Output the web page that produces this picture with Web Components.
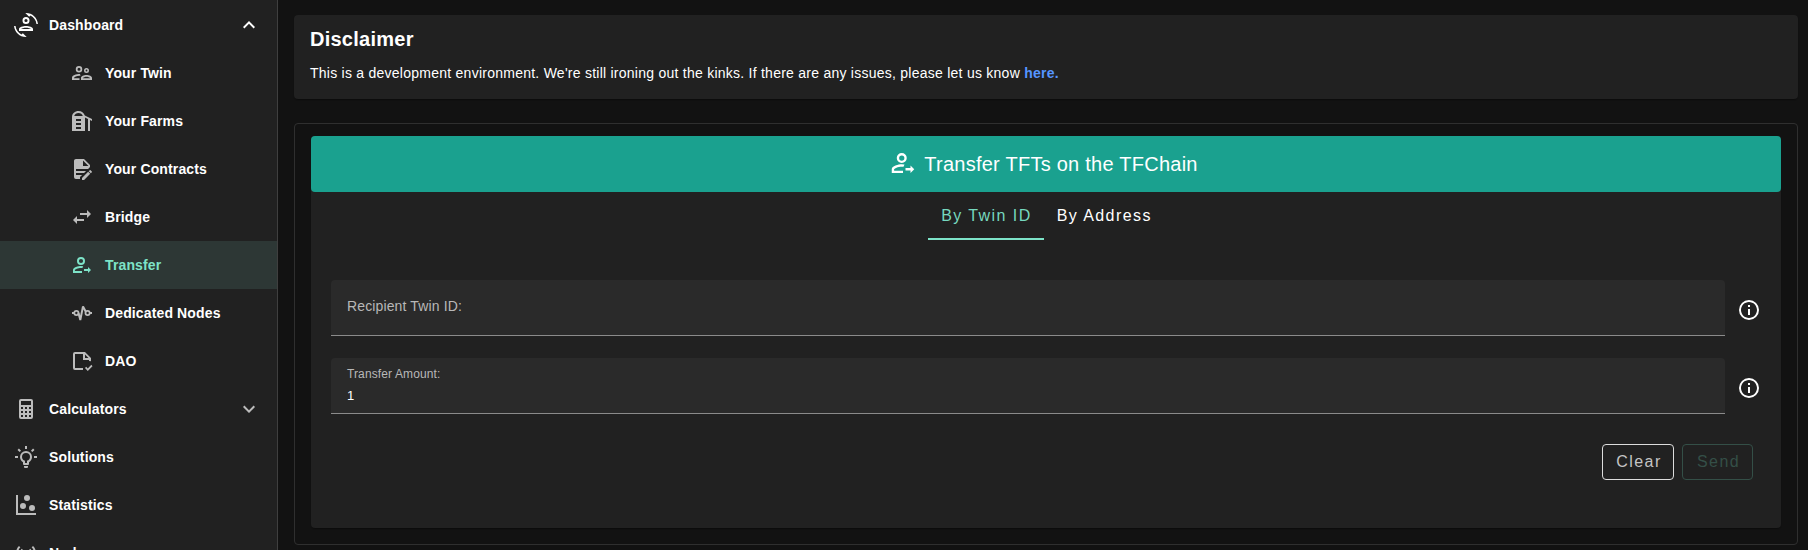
<!DOCTYPE html>
<html lang="en">
<head>
<meta charset="utf-8">
<title>Transfer</title>
<style>
body{margin:0;background:#121212;color:#fff;font-family:"Liberation Sans",Arial,sans-serif;overflow:hidden}
</style>
</head>
<body>
<dash-app></dash-app>
<script>
const ICONS = {
  convert: '<path d="M7.5 21.5L8.85 20.16L12.66 23.97L12 24C5.71 24 .56 19.16 .05 13H1.55C1.91 16.76 4.25 19.94 7.5 21.5M16.5 2.5L15.15 3.84L11.34 .03L12 0C18.29 0 23.44 4.84 23.95 11H22.45C22.09 7.24 19.75 4.07 16.5 2.5"/><path fill-rule="evenodd" d="M12 4A3.5 3.5 0 1 1 12 11A3.5 3.5 0 1 1 12 4M12 5.9A1.6 1.6 0 1 0 12 9.1A1.6 1.6 0 1 0 12 5.9M5 18V16C5 13.9 9 13 12 13S19 13.9 19 16V18ZM7.2 16.1H16.8C16.4 15.4 14 14.8 12 14.8S7.6 15.4 7.2 16.1Z"/>',
  twin: '<path fill-rule="evenodd" d="M9 5A3.25 3.25 0 1 1 9 11.5A3.25 3.25 0 1 1 9 5M9 6.75A1.5 1.5 0 1 0 9 9.75A1.5 1.5 0 1 0 9 6.75M16.5 7A2.5 2.5 0 1 1 16.5 12A2.5 2.5 0 1 1 16.5 7M16.5 8.6A.9 .9 0 1 0 16.5 10.4A.9 .9 0 1 0 16.5 8.6M2 19V16.8C2 14.2 6 13 10 13L10.5 14.7C7 14.5 4.2 15.6 3.9 17.2H9.5V19ZM11 19V17C11 15 13.8 14 16.5 14S22 15 22 17V19ZM12.9 17.3H20.1C19.5 16.3 18 15.8 16.5 15.8S13.5 16.3 12.9 17.3Z"/>',
  silo: '<path fill-rule="evenodd" d="M2 22V8C2 4.5 5 2 8.5 2C11.5 2 14 3.8 14.8 6.5L22 10V12L20 11V22H18V10L15 8.6V22ZM4.2 7H12.8C12.2 5.2 10.6 4 8.5 4S4.8 5.2 4.2 7ZM6 10V12H11V10ZM6 14V16H11V14ZM6 18V20H11V18Z"/>',
  contract: '<path d="M6,2C4.89,2 4,2.89 4,4V20A2,2 0 0,0 6,22H10V20.09L12.09,18H6V16H14.09L16.09,14H6V12H18.09L20,10.09V8L14,2H6M13,3.5L18.5,9H13V3.5M20.15,13C20,13 19.86,13.05 19.75,13.16L18.73,14.18L20.82,16.26L21.84,15.25C22.05,15.03 22.05,14.67 21.84,14.46L20.54,13.16C20.43,13.05 20.29,13 20.15,13M18.14,14.77L12,20.92V23H14.08L20.23,16.85L18.14,14.77Z"/>',
  bridge: '<path d="M21,9L17,5V8H10V10H17V13M7,11L3,15L7,19V16H14V14H7V11Z"/>',
  transfer: '<path fill-rule="evenodd" d="M11 4A4 4 0 1 1 11 12A4 4 0 1 1 11 4M11 5.9A2.1 2.1 0 1 0 11 10.1A2.1 2.1 0 1 0 11 5.9M3 20V17C3 14.33 8.33 13 11 13L13.2 13.2L12.4 15L11 14.9C8 14.9 4.9 16.36 4.9 17V18.1H12V20ZM14 16H18V14L21 17L18 20V18H14Z"/>',
  nodes: '<path fill="none" stroke="currentColor" stroke-width="2" stroke-linejoin="bevel" d="M2 12H4.2M8.5 12L10.3 19L13 5.4L15.8 10.8M19.8 12H22"/><g fill="none" stroke="currentColor" stroke-width="1.8"><circle cx="6.4" cy="12" r="2.1"/><circle cx="17.6" cy="12" r="2.1"/></g>',
  dao: '<path fill-rule="evenodd" d="M5 3H15L21 9V12.3L19 12V11H13V5H5V19H13V21H5A2 2 0 0 1 3 19V5A2 2 0 0 1 5 3M15 5.5V9H18.5ZM17.75 22L15 19L16.16 17.84L17.75 19.43L21.34 15.84L22.5 17.25Z"/>',
  calc: '<path d="M7,2H17A2,2 0 0,1 19,4V20A2,2 0 0,1 17,22H7A2,2 0 0,1 5,20V4A2,2 0 0,1 7,2M7,4V8H17V4H7M7,10V12H9V10H7M11,10V12H13V10H11M15,10V12H17V10H15M7,14V16H9V14H7M11,14V16H13V14H11M15,14V16H17V14H15M7,18V20H9V18H7M11,18V20H13V18H11M15,18V20H17V18H15Z"/>',
  bulb: '<path d="M20,11H23V13H20V11M1,11H4V13H1V11M13,1V4H11V1H13M4.92,3.5L7.05,5.64L5.63,7.05L3.5,4.93L4.92,3.5M16.95,5.63L19.07,3.5L20.5,4.93L18.37,7.05L16.95,5.63M12,6A6,6 0 0,1 18,12C18,14.22 16.79,16.16 15,17.2V19A1,1 0 0,1 14,20H10A1,1 0 0,1 9,19V17.2C7.21,16.16 6,14.22 6,12A6,6 0 0,1 12,6M14,21V22A1,1 0 0,1 13,23H11A1,1 0 0,1 10,22V21H14M11,18H13V15.87C14.73,15.43 16,13.86 16,12A4,4 0 0,0 12,8A4,4 0 0,0 8,12C8,13.86 9.27,15.43 11,15.87V18Z"/>',
  scatter: '<path d="M2,2H4V20H22V22H2V2M9,10A3,3 0 0,1 12,13A3,3 0 0,1 9,16A3,3 0 0,1 6,13A3,3 0 0,1 9,10M13,2A3,3 0 0,1 16,5A3,3 0 0,1 13,8A3,3 0 0,1 10,5A3,3 0 0,1 13,2M18,12A3,3 0 0,1 21,15A3,3 0 0,1 18,18A3,3 0 0,1 15,15A3,3 0 0,1 18,12Z"/>',
  access: '<path d="M4.93,4.93C3.12,6.74 2,9.24 2,12C2,14.76 3.12,17.26 4.93,19.07L6.34,17.66C4.89,16.22 4,14.22 4,12C4,9.79 4.89,7.78 6.34,6.34L4.93,4.93M19.07,4.93L17.66,6.34C19.11,7.78 20,9.79 20,12C20,14.22 19.11,16.22 17.66,17.66L19.07,19.07C20.88,17.26 22,14.76 22,12C22,9.24 20.88,6.74 19.07,4.93M7.76,7.76C6.67,8.85 6,10.35 6,12C6,13.65 6.67,15.15 7.76,16.24L9.17,14.83C8.45,14.11 8,13.11 8,12C8,10.89 8.45,9.89 9.17,9.17L7.76,7.76M16.24,7.76L14.83,9.17C15.55,9.89 16,10.89 16,12C16,13.11 15.55,14.11 14.83,14.83L16.24,16.24C17.33,15.15 18,13.65 18,12C18,10.35 17.33,8.85 16.24,7.76M12,10A2,2 0 0,0 10,12A2,2 0 0,0 12,14A2,2 0 0,0 14,12A2,2 0 0,0 12,10Z"/>',
  info: '<path d="M11,9H13V7H11M12,20C7.59,20 4,16.41 4,12C4,7.59 7.59,4 12,4C16.41,4 20,7.59 20,12C20,16.41 16.41,20 12,20M12,2A10,10 0 0,0 2,12A10,10 0 0,0 12,22A10,10 0 0,0 22,12A10,10 0 0,0 12,2M11,17H13V11H11V17Z"/>',
  up: '<path d="M7.41,15.41L12,10.83L16.59,15.41L18,14L12,8L6,14L7.41,15.41Z"/>',
  down: '<path d="M7.41,8.58L12,13.17L16.59,8.58L18,10L12,16L6,10L7.41,8.58Z"/>'
};

function define(name, render) {
  customElements.define(name, class extends HTMLElement {
    constructor() { super(); this.attachShadow({ mode: 'open' }); }
    connectedCallback() { this.shadowRoot.innerHTML = render(this); }
  });
}

define('dash-icon', el => `<style>
  :host{display:block;width:24px;height:24px;flex:none}
  svg{display:block;width:100%;height:100%;fill:currentColor}
</style><svg viewBox="0 0 24 24">${ICONS[el.getAttribute('name')]}</svg>`);

define('nav-item', el => `<style>
  :host{display:flex;align-items:center;height:48px;box-sizing:border-box;padding:0 16px 0 14px;gap:11px;font-weight:700;font-size:14px;line-height:20px;letter-spacing:.00938em;flex:none}
  :host([sub]){padding-left:70px}
  :host([active]){background:#2d3735;color:#7de3c8}
  dash-icon{color:#bcbcbc}
  :host([bright]) dash-icon{color:#fff}
  :host([active]) dash-icon{color:inherit}
  span{flex:1}
</style><dash-icon name="${el.getAttribute('icon')}"></dash-icon><span><slot></slot></span>
${el.hasAttribute('chevron') ? `<dash-icon name="${el.getAttribute('chevron')}"></dash-icon>` : ''}`);

define('side-nav', () => `<style>
  :host{display:flex;flex-direction:column;box-sizing:border-box;width:278px;height:550px;padding-top:1px;background:#212121;border-right:1px solid #3f3f3f;overflow:hidden;flex:none}
</style><slot></slot>`);

define('info-banner', () => `<style>
  :host{display:block;box-sizing:border-box;height:84px;padding:8px 16px;border-radius:4px;background:#212121;box-shadow:0 2px 1px -1px #0003,0 1px 1px #0002}
  h2{margin:0;font-size:20px;line-height:32px;letter-spacing:.0125em}
  p{margin:8px 0 0;font-size:14px;line-height:20px;letter-spacing:.0178571em}
  b{color:#5695ff}
</style><h2>Disclaimer</h2><p>This is a development environment. We're still ironing out the kinks. If there are any issues, please let us know <b>here.</b></p>`);

define('text-field', el => `<style>
  :host{display:flex;align-items:center;gap:12px;height:56px}
  .box{flex:1;height:56px;box-sizing:border-box;border-bottom:1px solid #8b8b8b;border-radius:4px 4px 0 0;background:#2a2a2a;padding:${el.hasAttribute('value') ? 8 : 16}px 16px 0}
  label{display:block;color:#b8b8b8;letter-spacing:.00938em;font-size:${el.hasAttribute('value') ? '12px;line-height:16px' : '14px;line-height:20px'}}
  .value{font-size:13px;line-height:16px;margin-top:6px}
  dash-icon{margin-top:4px}
</style><div class="box"><label><slot></slot></label>${el.hasAttribute('value') ? `<div class="value">${el.getAttribute('value')}</div>` : ''}</div><dash-icon name="info"></dash-icon>`);

define('tab-item', () => `<style>
  :host{display:flex;align-items:center;justify-content:center;box-sizing:border-box;height:48px;padding:2px 12px 0 13px;font-size:16px;letter-spacing:.0892857em;border-bottom:2px solid transparent}
  :host([selected]){color:#76d8bf;border-color:#7de3c8}
</style><slot></slot>`);

define('outline-button', () => `<style>
  :host{display:flex;align-items:center;justify-content:center;box-sizing:border-box;height:36px;width:72px;padding-left:2px;border:1px solid #dcdcdc;border-radius:4px;color:#c4c4c4;font-size:16px;letter-spacing:.0892857em}
  :host([disabled]){width:71px;border-color:#344f47;color:#344f47}
</style><slot></slot>`);

define('transfer-panel', () => `<style>
  :host{display:block;box-sizing:border-box;height:422px;border:1px solid #2f2f2f;border-radius:4px;padding:12px 16px 0}
  .card{height:392px;background:#212121;border-radius:4px;box-shadow:0 2px 1px -1px #0003,0 1px 1px #0002}
  header{height:56px;box-sizing:border-box;padding-right:6px;display:flex;align-items:center;justify-content:center;gap:6px;background:#1aa18f;border-radius:4px;font-size:20px;letter-spacing:.0125em}
  header dash-icon{width:30px;height:30px;margin-top:-3px}
  nav{display:flex;justify-content:center}
  .form{padding:40px 20px 0;display:flex;flex-direction:column;gap:22px}
  .actions{display:flex;justify-content:flex-end;gap:8px;padding:30px 28px 0}
</style><div class="card">
<header><dash-icon name="transfer"></dash-icon><span>Transfer TFTs on the TFChain</span></header>
<nav><tab-item selected>By Twin ID</tab-item><tab-item>By Address</tab-item></nav>
<div class="form"><text-field>Recipient Twin ID:</text-field><text-field value="1">Transfer Amount:</text-field></div>
<div class="actions"><outline-button>Clear</outline-button><outline-button disabled>Send</outline-button></div>
</div>`);

define('dash-app', () => `<style>
  :host{display:flex;height:550px}
  main{flex:1;padding:15px 10px 0 16px;display:flex;flex-direction:column;gap:24px}
</style><side-nav>
<nav-item icon="convert" chevron="up" bright>Dashboard</nav-item>
<nav-item sub icon="twin">Your Twin</nav-item>
<nav-item sub icon="silo">Your Farms</nav-item>
<nav-item sub icon="contract">Your Contracts</nav-item>
<nav-item sub icon="bridge">Bridge</nav-item>
<nav-item sub icon="transfer" active>Transfer</nav-item>
<nav-item sub icon="nodes">Dedicated Nodes</nav-item>
<nav-item sub icon="dao">DAO</nav-item>
<nav-item icon="calc" chevron="down">Calculators</nav-item>
<nav-item icon="bulb">Solutions</nav-item>
<nav-item icon="scatter">Statistics</nav-item>
<nav-item icon="access">Nodes</nav-item>
</side-nav><main><info-banner></info-banner><transfer-panel></transfer-panel></main>`);
</script>
</body>
</html>
